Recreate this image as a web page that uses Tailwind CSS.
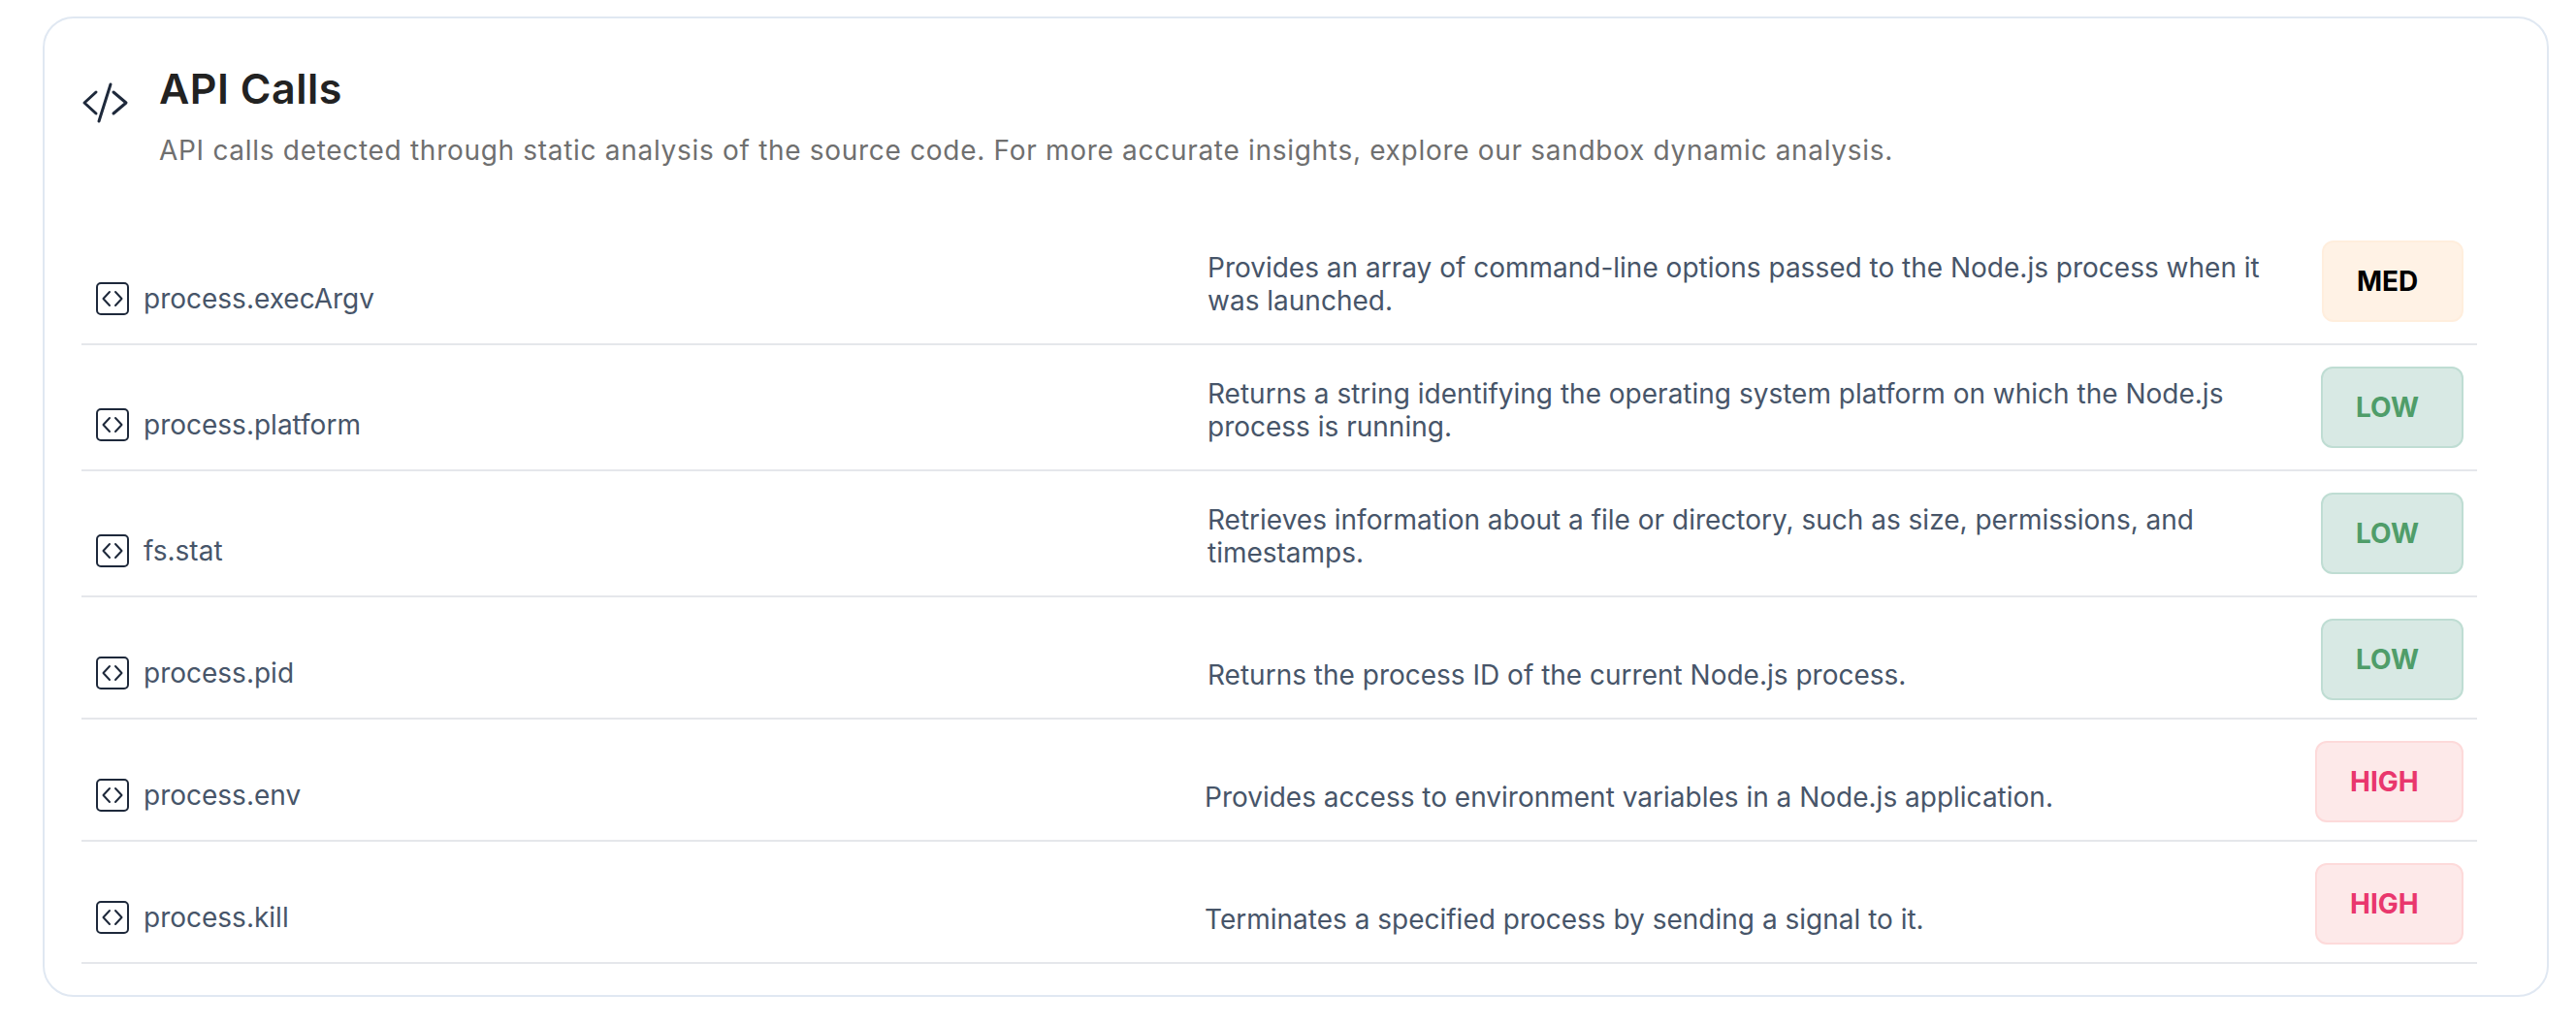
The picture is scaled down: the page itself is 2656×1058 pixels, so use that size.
<!DOCTYPE html>
<html lang="en">
<head>
    <meta charset="UTF-8">
    <title>API Calls</title>
    <script src="https://cdn.jsdelivr.net/npm/@tailwindcss/browser@4"></script>
</head>
<body class="bg-white font-['Inter',sans-serif]">
    <div class="pt-[17px] pl-[44px] w-[2628px]">
        <div class="h-[1011px] border-2 border-[#e0e8f2] rounded-[32px] pl-[38px] pr-[72px] pt-[48px]">
            <!-- header -->
            <div class="flex">
                <svg class="w-[50px] h-[44px] mt-[17px] text-[#1e293b]" viewBox="0 0 50 44" fill="none" stroke="currentColor" stroke-width="3" stroke-linecap="round" stroke-linejoin="round">
                    <path d="M15 11 3 22l12 11M33 11l13 11-13 11M30 3 18 41"/>
                </svg>
                <div class="ml-[30px]">
                    <h2 class="text-[43px] leading-[48px] font-semibold tracking-[0.5px] text-[#222222]">API Calls</h2>
                    <p class="mt-[22px] text-[28px] leading-[36px] tracking-[0.7px] text-[#6f6f6f]">API calls detected through static analysis of the source code. For more accurate insights, explore our sandbox dynamic analysis.</p>
                </div>
            </div>

            <!-- rows -->
            <div class="mt-[52px] text-[28px] leading-[34px] text-[#475569]">
                <div class="flex h-[131px] border-b-2 border-[#e5e7eb]">
                    <div class="w-[1161px] flex items-end pb-[29px] pl-[15px] gap-[15px]">
                        <svg class="w-[34px] h-[34px] text-[#1e293b]" viewBox="0 0 34 34" fill="none" stroke="currentColor" stroke-width="2" stroke-linecap="round" stroke-linejoin="round"><rect x="1" y="1" width="32" height="32" rx="4"/><path d="M14 10l-6.500 7 6.500 7M20 10l6.500 7-6.500 7"/></svg>
                        <span>process.execArgv</span>
                    </div>
                    <p class="w-[1149px] pt-[34px] pr-[30px]">Provides an array of command-line options passed to the Node.js process when it was launched.</p>
                    <div class="pt-[23px]"><span class="flex items-center pl-[34px] w-[146px] h-[84px] rounded-[12px] border-2 border-[#ffeedd] bg-[#fff2e5] font-bold text-[#000000]">MED</span></div>
                </div>
                <div class="flex h-[130px] border-b-2 border-[#e5e7eb]">
                    <div class="w-[1161px] flex items-end pb-[29px] pl-[15px] gap-[15px]">
                        <svg class="w-[34px] h-[34px] text-[#1e293b]" viewBox="0 0 34 34" fill="none" stroke="currentColor" stroke-width="2" stroke-linecap="round" stroke-linejoin="round"><rect x="1" y="1" width="32" height="32" rx="4"/><path d="M14 10l-6.500 7 6.500 7M20 10l6.500 7-6.500 7"/></svg>
                        <span>process.platform</span>
                    </div>
                    <p class="w-[1148px] pt-[33px] pr-[60px]">Returns a string identifying the operating system platform on which the Node.js process is running.</p>
                    <div class="pt-[22px]"><span class="flex items-center pl-[34px] w-[147px] h-[84px] rounded-[12px] border-2 border-[#bfddd3] bg-[#d8e9e4] font-bold text-[#4f9d69]">LOW</span></div>
                </div>
                <div class="flex h-[130px] border-b-2 border-[#e5e7eb]">
                    <div class="w-[1161px] flex items-end pb-[29px] pl-[15px] gap-[15px]">
                        <svg class="w-[34px] h-[34px] text-[#1e293b]" viewBox="0 0 34 34" fill="none" stroke="currentColor" stroke-width="2" stroke-linecap="round" stroke-linejoin="round"><rect x="1" y="1" width="32" height="32" rx="4"/><path d="M14 10l-6.500 7 6.500 7M20 10l6.500 7-6.500 7"/></svg>
                        <span>fs.stat</span>
                    </div>
                    <p class="w-[1148px] pt-[33px] pr-[60px]">Retrieves information about a file or directory, such as size, permissions, and timestamps.</p>
                    <div class="pt-[22px]"><span class="flex items-center pl-[34px] w-[147px] h-[84px] rounded-[12px] border-2 border-[#bfddd3] bg-[#d8e9e4] font-bold text-[#4f9d69]">LOW</span></div>
                </div>
                <div class="flex h-[126px] border-b-2 border-[#e5e7eb]">
                    <div class="w-[1161px] flex items-end pb-[29px] pl-[15px] gap-[15px]">
                        <svg class="w-[34px] h-[34px] text-[#1e293b]" viewBox="0 0 34 34" fill="none" stroke="currentColor" stroke-width="2" stroke-linecap="round" stroke-linejoin="round"><rect x="1" y="1" width="32" height="32" rx="4"/><path d="M14 10l-6.500 7 6.500 7M20 10l6.500 7-6.500 7"/></svg>
                        <span>process.pid</span>
                    </div>
                    <p class="w-[1148px] flex items-end pb-[27px]">Returns the process ID of the current Node.js process.</p>
                    <div class="pt-[22px]"><span class="flex items-center pl-[34px] w-[147px] h-[84px] rounded-[12px] border-2 border-[#bfddd3] bg-[#d8e9e4] font-bold text-[#4f9d69]">LOW</span></div>
                </div>
                <div class="flex h-[126px] border-b-2 border-[#e5e7eb]">
                    <div class="w-[1158px] flex items-end pb-[29px] pl-[15px] gap-[15px]">
                        <svg class="w-[34px] h-[34px] text-[#1e293b]" viewBox="0 0 34 34" fill="none" stroke="currentColor" stroke-width="2" stroke-linecap="round" stroke-linejoin="round"><rect x="1" y="1" width="32" height="32" rx="4"/><path d="M14 10l-6.500 7 6.500 7M20 10l6.500 7-6.500 7"/></svg>
                        <span>process.env</span>
                    </div>
                    <p class="w-[1145px] flex items-end pb-[27px]">Provides access to environment variables in a Node.js application.</p>
                    <div class="pt-[22px]"><span class="flex items-center pl-[34px] w-[153px] h-[84px] rounded-[12px] border-2 border-[#fddada] bg-[#fde9e9] font-bold text-[#e9376d]">HIGH</span></div>
                </div>
                <div class="flex h-[126px] border-b-2 border-[#e5e7eb]">
                    <div class="w-[1158px] flex items-end pb-[29px] pl-[15px] gap-[15px]">
                        <svg class="w-[34px] h-[34px] text-[#1e293b]" viewBox="0 0 34 34" fill="none" stroke="currentColor" stroke-width="2" stroke-linecap="round" stroke-linejoin="round"><rect x="1" y="1" width="32" height="32" rx="4"/><path d="M14 10l-6.500 7 6.500 7M20 10l6.500 7-6.500 7"/></svg>
                        <span>process.kill</span>
                    </div>
                    <p class="w-[1145px] flex items-end pb-[27px]">Terminates a specified process by sending a signal to it.</p>
                    <div class="pt-[22px]"><span class="flex items-center pl-[34px] w-[153px] h-[84px] rounded-[12px] border-2 border-[#fddada] bg-[#fde9e9] font-bold text-[#e9376d]">HIGH</span></div>
                </div>
            </div>
        </div>
    </div>
</body>
</html>
